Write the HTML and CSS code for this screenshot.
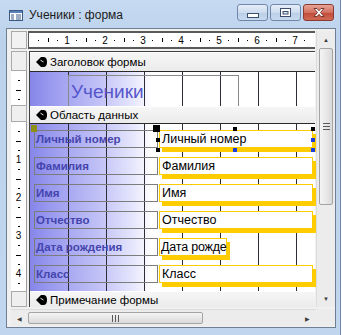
FILE: index.html
```html
<!DOCTYPE html>
<html lang="ru">
<head>
    <meta charset="UTF-8">
    <title>Ученики : форма</title>
    <link rel="stylesheet" href="styles.css">
</head>
<body>
    <div class="window">
        <div class="titlebar">
            <svg class="app-icon" width="14" height="11" viewBox="0 0 14 11">
                <rect x="0.5" y="0.5" width="13" height="10" fill="#fff" stroke="#3b5a8a"/>
                <rect x="1" y="1" width="12" height="2" fill="#5a7fb8"/>
                <path d="M2 5h3M2 7h3M2 9h3M7 5h5M7 7h5M7 9h5" stroke="#3b5a8a"/>
            </svg>
            <span class="title">Ученики : форма</span>
            <div class="caption-btns">
                <div class="cbtn">
                    <svg width="12" height="5" viewBox="0 0 12 5"><rect x="0.5" y="0.5" width="11" height="4" fill="#fff" stroke="#3a4f6c"/></svg>
                </div>
                <div class="cbtn">
                    <svg width="11" height="9" viewBox="0 0 11 9"><rect x="0.5" y="0.5" width="10" height="8" fill="#fff" stroke="#3a4f6c"/><rect x="3" y="3.5" width="5" height="2.5" fill="#dde8f4" stroke="#3a4f6c"/></svg>
                </div>
                <div class="cbtn close">
                    <svg width="14" height="11" viewBox="0 0 14 11"><path d="M2 1.5h3l2 2.2 2-2.2h3l-3.5 4 3.5 4h-3l-2-2.2-2 2.2h-3l3.5-4z" fill="#fff" stroke="#6b2a22" stroke-width="0.9"/></svg>
                </div>
            </div>
        </div>

        <div class="client">
            <div class="corner"></div>
            <div class="hruler" id="hruler"></div>
            <div class="vscroll">
                <div class="arrow">&#9650;</div>
                <div class="vthumb"><span class="grip-v"></span></div>
                <div class="vtrack"></div>
                <div class="arrow">&#9660;</div>
            </div>

            <div class="leftcol">
                <div class="lbox bar1"></div>
                <div class="vruler hdr">
                    <i class="q"></i><i class="h"></i><i class="q"></i>
                </div>
                <div class="lbox bar2"></div>
                <div class="vruler dtl" id="vruler"></div>
                <div class="lbox bar3"></div>
            </div>

            <div class="surface">
                <div class="secbar bar1">
                    <svg class="sel" width="11" height="10" viewBox="0 0 11 10"><path d="M0 5L5 0H8Q11 0.5 11 5Q11 9.5 8 10H5Z" fill="#000"/><path d="M4.5 3.2L7.5 5" stroke="#fff" stroke-width="0.9"/></svg>
                    Заголовок формы
                </div>
                <div class="sect header">
                    <div class="caption-label">Ученики</div>
                </div>
                <div class="secbar bar2">
                    <svg class="sel" width="11" height="10" viewBox="0 0 11 10"><path d="M0 5L5 0H8Q11 0.5 11 5Q11 9.5 8 10H5Z" fill="#000"/><path d="M4.5 3.2L7.5 5" stroke="#fff" stroke-width="0.9"/></svg>
                    Область данных
                </div>
                <div class="sect detail">
                    <div class="row">
                        <div class="label">Личный номер<span class="lhandle"></span></div>
                        <div class="field selected">Личный номер
                            <span class="hd big"></span>
                            <span class="hd tm"></span>
                            <span class="hd tr"></span>
                            <span class="hd lm"></span>
                            <span class="hd bl"></span>
                            <span class="hd rm blue"></span>
                            <span class="hd bm blue"></span>
                            <span class="hd br blue"></span>
                        </div>
                    </div>
                    <div class="row">
                        <div class="label">Фамилия</div>
                        <div class="field">Фамилия</div>
                    </div>
                    <div class="row">
                        <div class="label">Имя</div>
                        <div class="field">Имя</div>
                    </div>
                    <div class="row">
                        <div class="label">Отчество</div>
                        <div class="field">Отчество</div>
                    </div>
                    <div class="row">
                        <div class="label">Дата рождения</div>
                        <div class="field short">Дата рожде</div>
                    </div>
                    <div class="row">
                        <div class="label">Класс</div>
                        <div class="field">Класс</div>
                    </div>
                </div>
                <div class="secbar bar3">
                    <svg class="sel" width="11" height="10" viewBox="0 0 11 10"><path d="M0 5L5 0H8Q11 0.5 11 5Q11 9.5 8 10H5Z" fill="#000"/><path d="M4.5 3.2L7.5 5" stroke="#fff" stroke-width="0.9"/></svg>
                    Примечание формы
                </div>
            </div>

            <div class="hscroll">
                <div class="arrow">&#9664;</div>
                <div class="hthumb"><span class="grip-h"></span></div>
                <div class="htrack"></div>
                <div class="arrow">&#9654;</div>
            </div>
            <div class="corner2"></div>
        </div>
    </div>

    <script>
        // метки линеек: каждые 0,25 см
        const hruler = document.getElementById('hruler');
        for (let i = 1; i <= 29; i++) {
            const cell = document.createElement('span');
            cell.className = 'tick';
            if (i % 4 === 0) {
                cell.textContent = i / 4;
            } else if (i % 2 === 0) {
                cell.innerHTML = '<i class="hh"></i>';
            } else {
                cell.innerHTML = '<i class="hq"></i>';
            }
            hruler.appendChild(cell);
        }

        const vruler = document.getElementById('vruler');
        for (let i = 1; i <= 17; i++) {
            const cell = document.createElement('span');
            cell.className = 'vtick';
            if (i % 4 === 0) {
                cell.textContent = i / 4;
            } else if (i % 2 === 0) {
                cell.innerHTML = '<i class="h"></i>';
            } else {
                cell.innerHTML = '<i class="q"></i>';
            }
            vruler.appendChild(cell);
        }
    </script>
</body>
</html>
```

FILE: styles.css
```css
body {
    margin: 0;
    width: 342px;
    height: 335px;
    overflow: hidden;
    background: #fff;
    font-family: "Liberation Sans", Arial, sans-serif;
}
.window {
    box-sizing: border-box;
    width: 341px;
    height: 335px;
    padding: 0 4px 0 6px;
    background: linear-gradient(#c6daf1, #bcd2ec 40px, #c1d6ee);
    border-right: 1px solid #6f86a8;
}
.titlebar {
    height: 28px;
    display: flex;
    align-items: center;
}
.app-icon {
    margin: 2px 0 0 3px;
}
.title {
    margin-left: 6px;
    margin-top: 2px;
    font-size: 12px;
    color: #1b1b1b;
}
.caption-btns {
    margin-left: auto;
    display: flex;
    gap: 2px;
    margin-top: -3px;
    margin-right: 2px;
}
.cbtn {
    box-sizing: border-box;
    width: 31px;
    height: 17px;
    border: 1px solid #6f87a8;
    border-radius: 3px;
    background: linear-gradient(#e6eef8, #cddcef 50%, #b9cde6 51%, #c9daee);
    display: flex;
    align-items: center;
    justify-content: center;
}
.cbtn:first-child svg {
    margin-top: 5px;
}
.cbtn.close {
    border-color: #8b3a32;
    background: linear-gradient(#e7a497, #d2705f 50%, #c24a38 51%, #cf6a55);
}

.client {
    box-sizing: border-box;
    height: 300px;
    background: #f0f0f0;
    border: 1px solid #6e7f94;
    display: grid;
    grid-template-columns: 16px 287px 17px;
    grid-template-rows: 18px 256px 17px;
    column-gap: 2px;
    row-gap: 2px;
    padding: 2px 2px 2px 4px;
}
.corner {
    box-sizing: border-box;
    border: 1px solid #a9a9a9;
    background: #f2f2f2;
}
.hruler {
    margin-left: -1px;
    background: #fff;
    border-top: 2px solid #5a5a5a;
    border-bottom: 2px solid #5a5a5a;
    border-left: 1px solid #5a5a5a;
    display: flex;
    padding-left: 4.75px;
    overflow: hidden;
    margin-right: 1px;
}
.tick {
    flex: 0 0 9.5px;
    display: flex;
    align-items: center;
    justify-content: center;
    font-size: 10px;
    color: #000;
}
.hq {
    width: 1px;
    height: 1px;
    background: #000;
}
.hh {
    width: 1px;
    height: 4px;
    background: #000;
}

.vscroll {
    grid-row: 1 / 3;
    grid-column: 3;
    margin-left: -2px;
    display: flex;
    flex-direction: column;
    background: #ececec;
    border-left: 1px solid #dcdcdc;
}
.arrow {
    height: 17px;
    display: flex;
    align-items: center;
    justify-content: center;
    font-size: 6px;
    color: #3c3c3c;
}
.vthumb {
    height: 157px;
    margin: 0 2px;
    box-sizing: border-box;
    border: 1px solid #a4a4a4;
    border-radius: 2px;
    background: linear-gradient(90deg, #f4f4f4, #e8e8e8 50%, #d9d9d9);
    display: flex;
    align-items: center;
    justify-content: center;
}
.grip-v {
    width: 7px;
    height: 7px;
    background: repeating-linear-gradient(#5a5a5a 0 1px, transparent 1px 3px);
}
.vtrack {
    flex: 1;
}

.leftcol {
    display: flex;
    flex-direction: column;
}
.lbox {
    box-sizing: border-box;
    border: 1px solid #aaa;
    background: #efefef;
}
.leftcol .bar1 { height: 20px; }
.leftcol .bar2 { height: 17px; }
.leftcol .bar3 { height: 16px; }
.vruler {
    background: #fff;
    border-right: 1px solid #9a9a9a;
    display: flex;
    flex-direction: column;
    align-items: center;
    box-sizing: border-box;
}
.vruler.hdr {
    height: 34px;
    padding-top: 4.75px;
}
.vruler.hdr i {
    height: 9.5px;
}
.vruler.dtl {
    height: 169px;
    padding-top: 4.75px;
}
.vtick {
    height: 9.5px;
    line-height: 9.5px;
    font-size: 10px;
    display: flex;
    align-items: center;
    justify-content: center;
}
.q, .h {
    display: flex;
    align-items: center;
}
.q::before, .h::before {
    content: "";
    display: block;
    height: 1px;
    background: #000;
}
.q::before { width: 2px; }
.h::before { width: 5px; }

.surface {
    border-top: 1px solid #404040;
    border-left: 1px solid #404040;
    display: flex;
    flex-direction: column;
    background: #f0f0f0;
    margin-right: 1px;
}
.secbar {
    display: flex;
    align-items: center;
    gap: 3px;
    padding-left: 6px;
    font-size: 11.5px;
    color: #000;
    background: linear-gradient(#f6f6f6, #ebebeb);
    border-top: 1px solid #fff;
    box-sizing: border-box;
}
.secbar.bar1 { height: 19px; }
.secbar.bar2 { height: 17px; }
.secbar.bar3 { height: 16px; }
.sel {
    flex: none;
}
.sect {
    box-sizing: border-box;
    border-top: 1px solid #2a2a2a;
    background:
        repeating-linear-gradient(90deg, transparent 0 37px, #2d2d3a 37px 38px) 0 0 / 100% 100% no-repeat,
        linear-gradient(90deg, #8686ea 0, #9b9bef 22px, #c2c2f7 70px, #e8e8fd 105px, #fff 122px);
    background-position: 1px 0, 0 0;
}
.header {
    height: 35px;
    padding: 3px 0 0 38px;
}
.caption-label {
    box-sizing: border-box;
    width: 171px;
    height: 31px;
    border: 1px solid #8a8a8a;
    border-bottom: none;
    font-size: 19px;
    color: #5656cc;
    padding: 5px 0 0 2px;
}
.detail {
    height: 169px;
    padding: 6px 0 0 4px;
    display: flex;
    flex-direction: column;
    gap: 9px;
}
.row {
    display: flex;
    gap: 1px;
    height: 18px;
}
.label {
    position: relative;
    box-sizing: border-box;
    width: 124px;
    border: 1px solid #7c7c7c;
    font-size: 11.5px;
    font-weight: bold;
    color: #4545ad;
    padding-left: 1px;
    line-height: 16px;
}
.field {
    position: relative;
    box-sizing: border-box;
    width: 154px;
    border: 1px solid #ffcc00;
    background: #fff;
    box-shadow: 3px 4px 0 #ffcc00;
    font-size: 12.5px;
    line-height: 16px;
    padding-left: 2px;
    white-space: nowrap;
}
.field.short {
    width: 68px;
    padding-left: 1px;
    letter-spacing: -0.2px;
}
.lhandle {
    position: absolute;
    left: -4px;
    top: -6px;
    width: 6px;
    height: 7px;
    background: #8f8f14;
}
.hd {
    position: absolute;
    width: 4px;
    height: 4px;
    background: #000;
}
.hd.blue { background: #1b3ee0; }
.hd.big { left: -7px; top: -6px; width: 7px; height: 7px; }
.hd.tm { left: 73px; top: -4px; }
.hd.tr { left: 151px; top: -4px; }
.hd.lm { left: -4px; top: 7px; }
.hd.bl { left: -4px; top: 17px; }
.hd.rm { left: 151px; top: 7px; }
.hd.bm { left: 73px; top: 17px; }
.hd.br { left: 151px; top: 17px; }

.hscroll {
    grid-column: 1 / 3;
    display: flex;
    background: #ececec;
    border-top: 1px solid #dcdcdc;
}
.hscroll .arrow {
    width: 17px;
    height: auto;
}
.hthumb {
    width: 175px;
    margin: 2px 0;
    box-sizing: border-box;
    border: 1px solid #a4a4a4;
    border-radius: 2px;
    background: linear-gradient(#f4f4f4, #e8e8e8 50%, #d9d9d9);
    display: flex;
    align-items: center;
    justify-content: center;
}
.grip-h {
    width: 7px;
    height: 7px;
    background: repeating-linear-gradient(90deg, #5a5a5a 0 1px, transparent 1px 3px);
}
.htrack {
    flex: 1;
}
.corner2 {
    margin-left: -2px;
    background: #ececec;
}
```
